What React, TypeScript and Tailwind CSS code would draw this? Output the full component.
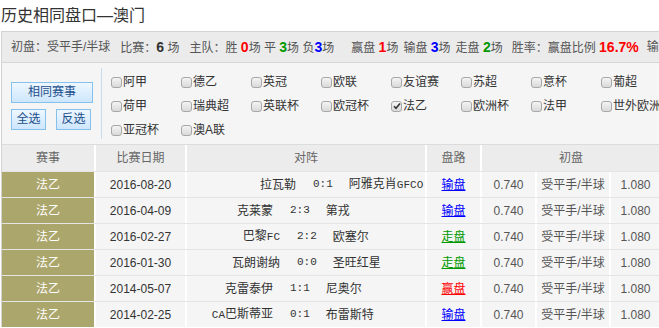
import React from "react";

const leagues: { name: string; checked?: boolean }[][] = [
  [{ name: "阿甲" }, { name: "德乙" }, { name: "英冠" }, { name: "欧联" }, { name: "友谊赛" }, { name: "苏超" }, { name: "意杯" }, { name: "葡超" }],
  [{ name: "荷甲" }, { name: "瑞典超" }, { name: "英联杯" }, { name: "欧冠杯" }, { name: "法乙", checked: true }, { name: "欧洲杯" }, { name: "法甲" }, { name: "世外欧洲" }],
  [{ name: "亚冠杯" }, { name: "澳A联" }],
];

type Row = {
  date: string;
  home: [string, string?];
  score: string;
  away: [string, string?];
  result: "输盘" | "走盘" | "赢盘";
  homeW: string;
};

const rows: Row[] = [
  { date: "2016-08-20", home: ["拉瓦勒"], score: "0:1", away: ["阿雅克肖", "GFCO"], result: "输盘", homeW: "w-[109px]" },
  { date: "2016-04-09", home: ["克莱蒙"], score: "2:3", away: ["第戎"], result: "输盘", homeW: "w-[86px]" },
  { date: "2016-02-27", home: ["巴黎", "FC"], score: "2:2", away: ["欧塞尔"], result: "走盘", homeW: "w-[93px]" },
  { date: "2016-01-30", home: ["瓦朗谢纳"], score: "0:0", away: ["圣旺红星"], result: "走盘", homeW: "w-[93px]" },
  { date: "2014-05-07", home: ["克雷泰伊"], score: "1:1", away: ["尼奥尔"], result: "赢盘", homeW: "w-[86px]" },
  { date: "2014-02-25", home: ["CA", "巴斯蒂亚"], score: "0:1", away: ["布雷斯特"], result: "输盘", homeW: "w-[86px]" },
];

const resultColor = {
  输盘: "text-[#0000ff]",
  走盘: "text-[#009900]",
  赢盘: "text-[#ff0000]",
};

const mono = "font-['Liberation_Mono',monospace] text-[11px]";

function TeamName({ parts }: { parts: [string, string?] }) {
  const [a, b] = parts;
  // latin bits are rendered in the small mono font, like the original page
  if (a === "CA") {
    return (
      <>
        <span className={mono}>CA</span>
        {b}
      </>
    );
  }
  return (
    <>
      {a}
      {b && <span className={mono}>{b}</span>}
    </>
  );
}

function Checkbox({ checked }: { checked?: boolean }) {
  return (
    <span className="w-[11px] h-[11px] rounded-[3px] border border-[#a8a8a8] bg-gradient-to-b from-[#f4f4f4] to-[#d9d9d9] flex items-center justify-center shrink-0">
      {checked && (
        <svg width="8" height="8" viewBox="0 0 8 8">
          <path d="M1 4.2 L3 6.2 L7 1.5" stroke="#333" strokeWidth="1.6" fill="none" />
        </svg>
      )}
    </span>
  );
}

const btn =
  "h-[21px] border border-[#86c0ec] bg-gradient-to-b from-[#eef7ff] to-[#cde6fd] text-[12px] text-[#1d4e8c] leading-[19px]";

export default function App() {
  return (
    <div className="w-[659px] h-[328px] overflow-hidden bg-white text-[#333] font-['Liberation_Sans','Noto_Sans_CJK_SC',sans-serif]">
      {/* title */}
      <div className="h-[31px] pl-[1px] text-[16px] leading-[31px] text-[#333] whitespace-nowrap">历史相同盘口—澳门</div>

      <div className="ml-[1px] w-[1000px] border-l border-t border-[#d3d3d3]">
        {/* summary bar */}
        <div className="h-[31px] bg-[#ebebeb] border-b border-[#d6d6d6] pl-[9px] flex items-center text-[12px] text-[#555] whitespace-nowrap">
          <span>初盘：受平手/半球</span>
          <span className="ml-[10px]">
            比赛：<b className="text-[14px] text-[#333]">6</b> 场
          </span>
          <span className="ml-[10px]">
            主队：胜 <b className="text-[14px] text-[#ff0000]">0</b>场 平 <b className="text-[14px] text-[#009900]">3</b>场 负<b className="text-[14px] text-[#0000ff]">3</b>场
          </span>
          <span className="ml-[17px]">
            赢盘 <b className="text-[14px] text-[#ff0000]">1</b>场
          </span>
          <span className="ml-[5px]">
            输盘 <b className="text-[14px] text-[#0000ff]">3</b>场
          </span>
          <span className="ml-[5px]">
            走盘 <b className="text-[14px] text-[#009900]">2</b>场
          </span>
          <span className="ml-[9px]">
            胜率：赢盘比例 <b className="text-[14px] text-[#ff0000]">16.7%</b>
          </span>
          <span className="ml-[8px]">输盘比例</span>
        </div>

        {/* filter */}
        <div className="h-[82px] bg-[#f5f5f5] border-b border-[#dcdcdc] flex">
          <div className="w-[100px] py-[5px] shrink-0">
            <div className="h-full border-r border-[#c9dcec] pl-[9px] pt-[11px]">
              <button className={`${btn} w-[82px]`}>相同赛事</button>
              <div className="flex gap-[10px] mt-[6px]">
                <button className={`${btn} w-[35px]`}>全选</button>
                <button className={`${btn} w-[35px]`}>反选</button>
              </div>
            </div>
          </div>
          <div className="pl-[9px] pt-[7px] flex flex-col">
            {leagues.map((line, i) => (
              <div key={i} className="flex h-[24px]">
                {line.map((l) => (
                  <label key={l.name} className="w-[70px] shrink-0 flex items-center gap-[1px] text-[12px] text-[#333] whitespace-nowrap">
                    <Checkbox checked={l.checked} />
                    <span>{l.name}</span>
                  </label>
                ))}
              </div>
            ))}
          </div>
        </div>

        {/* table */}
        <div className="text-[12px]">
          <div className="flex h-[26px] bg-[#ececec] text-[#666] items-stretch">
            <div className="w-[94px] border-r-2 border-white flex items-center justify-center">赛事</div>
            <div className="w-[91px] border-r-2 border-white flex items-center justify-center">比赛日期</div>
            <div className="w-[240px] border-r-2 border-white flex items-center justify-center">对阵</div>
            <div className="w-[55px] border-r-2 border-white flex items-center justify-center">盘路</div>
            <div className="w-[180px] border-r-2 border-white flex items-center justify-center">初盘</div>
            <div className="w-[120px]"></div>
          </div>
          {rows.map((r) => (
            <div key={r.date} className="flex h-[26px] border-t border-[#e4e4e4] bg-[#f5f5f5] items-stretch">
              <div className="w-[94px] border-r-2 border-white bg-[#aba66b] text-white flex items-center justify-center">法乙</div>
              <div className="w-[91px] border-r-2 border-white flex items-center justify-center text-[#333]">{r.date}</div>
              <div className="w-[240px] border-r-2 border-white flex items-center text-[#333] whitespace-nowrap">
                <div className={`${r.homeW} text-right shrink-0`}>
                  <TeamName parts={r.home} />
                </div>
                <span className={`${mono} ml-[17px]`}>{r.score}</span>
                <span className="ml-[16px]">
                  <TeamName parts={r.away} />
                </span>
              </div>
              <div className="w-[55px] border-r-2 border-white flex items-center justify-center">
                <span className={`${resultColor[r.result]} underline`}>{r.result}</span>
              </div>
              <div className="w-[55px] border-r-2 border-white flex items-center justify-center text-[#555]">0.740</div>
              <div className="w-[74px] border-r-2 border-white flex items-center justify-center text-[#555]">受平手/半球</div>
              <div className="w-[51px] border-r-2 border-white flex items-center justify-center text-[#555]">1.080</div>
              <div className="w-[120px]"></div>
            </div>
          ))}
        </div>
      </div>
    </div>
  );
}
